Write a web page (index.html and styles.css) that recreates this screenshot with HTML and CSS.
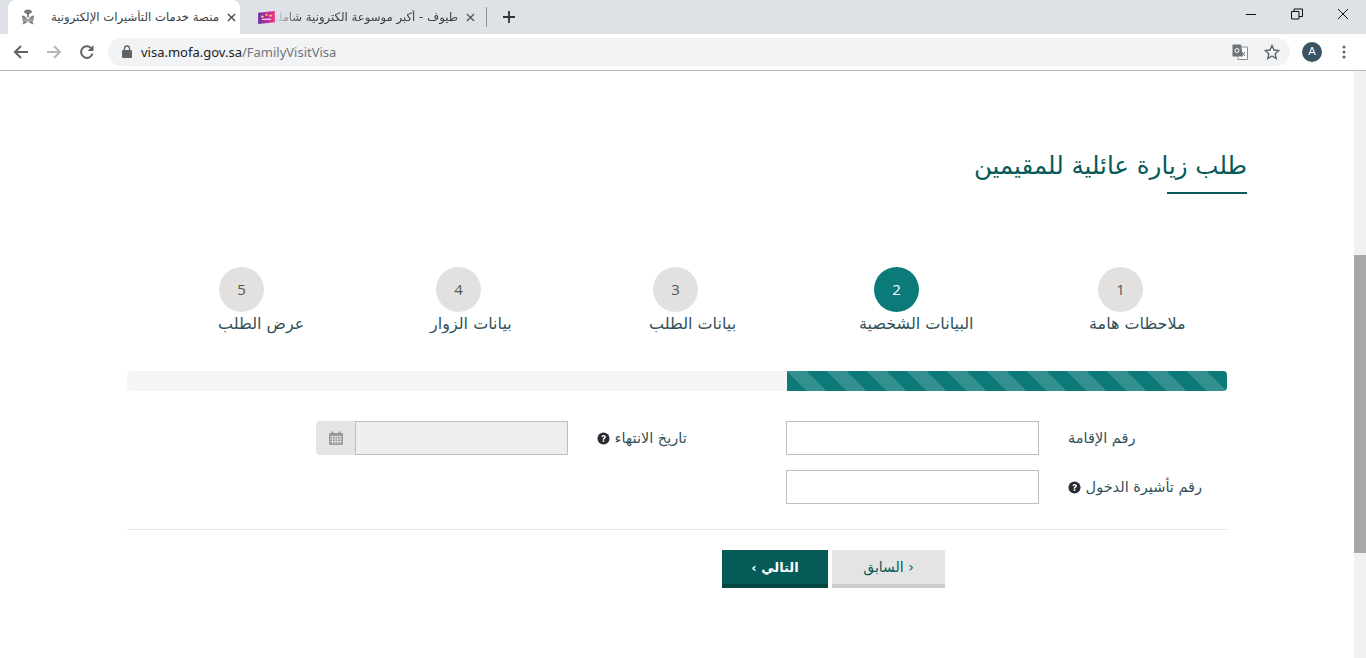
FILE: index.html
```html
<!DOCTYPE html>
<html lang="ar">
<head>
  <meta charset="UTF-8" />
  <title>منصة خدمات التأشيرات الإلكترونية</title>
  <link rel="stylesheet" href="styles.css">
</head>
<body>
  <!-- browser chrome -->
  <div class="tabstrip">
    <div class="tab tab-active">
      <svg class="favicon" viewBox="0 0 16 16"><path d="M8 .5c2.500 0 4 1.300 4 3L8 5.500 4 3.500C4 1.800 5.500 .5 8 .5z" fill="#777b77"/><path d="M7.300 4h1.400v4H7.300z" fill="#55594f"/><path d="M2 6.500c2.500 0 5 1.500 5 3.500v3.500L4 15C2.500 13 2 10 2 6.500zM14 6.500c-2.500 0-5 1.500-5 3.500v3.500l3 1.500c1.500-2 2-5 2-8.500z" fill="#9b9f9b"/><path d="M2.500 15L13.500 7.500M13.500 15L2.500 7.500" stroke="#5d615d" stroke-width="1"/><path d="M5 9h6M5 11h6M5.500 13h5" stroke="#c3c6c3" stroke-width=".8"/></svg>
      <span class="tab-title">منصة خدمات التأشيرات الإلكترونية</span>
      <svg class="tab-close" viewBox="0 0 10 10"><path d="M1 1l8 8M9 1L1 9" stroke="#45484c" stroke-width="1.500"/></svg>
    </div>
    <div class="tab tab-other">
      <svg class="favicon favicon-wide" viewBox="0 0 18 14"><defs><linearGradient id="tayf" x1="0" y1="0" x2="1" y2="0"><stop offset="0" stop-color="#6d2fa8"/><stop offset=".6" stop-color="#c42a9a"/><stop offset="1" stop-color="#f5377f"/></linearGradient></defs><path d="M0 2l18-2v12L0 14z" fill="url(#tayf)"/><path d="M3 6h3M8 4h2M12 5h3" stroke="#f3d25a" stroke-width="2"/><path d="M4 9h10" stroke="#f7c7e4" stroke-width="1.500"/></svg>
      <span class="tab-title tab-fade">طيوف - أكبر موسوعة الكترونية شاملة</span>
      <svg class="tab-close" viewBox="0 0 10 10"><path d="M1 1l8 8M9 1L1 9" stroke="#55585c" stroke-width="1.500"/></svg>
    </div>
    <span class="tab-sep"></span>
    <svg class="new-tab" viewBox="0 0 12 12"><path d="M6 0v12M0 6h12" stroke="#303438" stroke-width="1.800"/></svg>
    <div class="win-controls">
      <svg viewBox="0 0 12 12"><path d="M1 6.500h10" stroke="#111" stroke-width="1"/></svg>
      <svg viewBox="0 0 12 12"><path d="M.5 3.500h7.500v7.500H.5zM3 3.500V1h8.500v7.500H8" fill="none" stroke="#111" stroke-width="1"/></svg>
      <svg viewBox="0 0 12 12"><path d="M1 1l10 10M11 1L1 11" stroke="#111" stroke-width="1"/></svg>
    </div>
  </div>

  <div class="toolbar">
    <svg class="nav-icon" viewBox="0 0 16 16"><path d="M15 8H2M8 2L2 8l6 6" fill="none" stroke="#5f6368" stroke-width="2"/></svg>
    <svg class="nav-icon" viewBox="0 0 16 16"><path d="M1 8h13M8 2l6 6-6 6" fill="none" stroke="#b4b7bb" stroke-width="2"/></svg>
    <svg class="nav-icon" viewBox="0 0 16 16"><path d="M13.500 9.500A5.800 5.800 0 1 1 12 4" fill="none" stroke="#5f6368" stroke-width="2"/><path d="M14.500 1v6h-6z" fill="#5f6368"/></svg>
    <div class="omnibox">
      <svg class="lock" viewBox="0 0 10 13"><path d="M2.500 5V3.500a2.500 2.500 0 0 1 5 0V5" fill="none" stroke="#5f6368" stroke-width="1.300"/><rect y="5" width="10" height="8" rx="1" fill="#5f6368"/></svg>
      <span class="url">visa.mofa.gov.sa<span class="url-path">/FamilyVisitVisa</span></span>
      <svg class="translate" viewBox="0 0 16 16"><path d="M6 3h9.500v12.500H6z" fill="#fff" stroke="#8a8d90"/><path d="M.5.500h8.500l2 12H.5z" fill="#6f7377"/><circle cx="5" cy="6.500" r="2" fill="none" stroke="#fff"/><path d="M10 8l3 4M13 8l-3 4" stroke="#6f7377"/></svg>
      <svg class="star" viewBox="0 0 16 16"><path d="M8 1.500l2 4.500 4.800.5-3.600 3.200 1 4.800L8 12l-4.200 2.500 1-4.800L1.200 6.500 6 6z" fill="none" stroke="#5f6368" stroke-width="1.400"/></svg>
    </div>
    <span class="avatar">A</span>
    <svg class="menu-dots" viewBox="0 0 4 14"><circle cx="2" cy="2" r="1.500"/><circle cx="2" cy="7" r="1.500"/><circle cx="2" cy="12" r="1.500"/></svg>
  </div>

  <!-- page -->
  <div class="viewport">
    <main class="page" dir="rtl">
      <h2 class="page-title">طلب زيارة عائلية للمقيمين</h2>

      <div class="steps">
        <div class="step"><span class="circle">1</span><span class="step-label">ملاحظات هامة</span></div>
        <div class="step step-current"><span class="circle">2</span><span class="step-label">البيانات الشخصية</span></div>
        <div class="step"><span class="circle">3</span><span class="step-label">بيانات الطلب</span></div>
        <div class="step"><span class="circle">4</span><span class="step-label">بيانات الزوار</span></div>
        <div class="step"><span class="circle">5</span><span class="step-label">عرض الطلب</span></div>
      </div>

      <div class="progress"><div class="progress-bar" style="width: 40%"></div></div>

      <form class="visa-form">
        <label class="field-label" for="iqama">رقم الإقامة</label>
        <input class="field" id="iqama" type="text">
        <label class="field-label" for="expiry">تاريخ الانتهاء
          <svg class="help" viewBox="0 0 14 14"><circle cx="7" cy="7" r="6.500" fill="#2b2b33"/><path d="M4.800 5.400C5 3.900 6 3.300 7.200 3.300c1.300 0 2.300.8 2.300 2 0 1.700-1.800 1.500-1.800 3H6.100c0-2.200 1.700-2 1.700-3 0-.5-.3-.8-.8-.8s-.8.300-1 1z" fill="#fff"/><rect x="6.100" y="9" width="1.700" height="1.700" fill="#fff"/></svg>
        </label>
        <div class="date-group">
          <input class="field field-disabled" id="expiry" type="text" disabled>
          <span class="date-addon">
            <svg viewBox="0 0 14 14"><path d="M0 3a1 1 0 0 1 1-1h12a1 1 0 0 1 1 1v10a1 1 0 0 1-1 1H1a1 1 0 0 1-1-1z" fill="#999"/><path d="M1 5.500h12M1 8h12M1 10.500h12M3.500 5v8M6 5v8M8.500 5v8M11 5v8" stroke="#e4e4e4" stroke-width=".8"/><path d="M3.500 .5v3M10.500 .5v3" stroke="#999" stroke-width="2"/></svg>
          </span>
        </div>
        <label class="field-label" for="entry">رقم تأشيرة الدخول
          <svg class="help" viewBox="0 0 14 14"><circle cx="7" cy="7" r="6.500" fill="#2b2b33"/><path d="M4.800 5.400C5 3.900 6 3.300 7.200 3.300c1.300 0 2.300.8 2.300 2 0 1.700-1.800 1.500-1.800 3H6.100c0-2.200 1.700-2 1.700-3 0-.5-.3-.8-.8-.8s-.8.300-1 1z" fill="#fff"/><rect x="6.100" y="9" width="1.700" height="1.700" fill="#fff"/></svg>
        </label>
        <input class="field" id="entry" type="text">
      </form>

      <hr class="divider">

      <div class="actions">
        <button class="btn btn-prev" type="button">&lsaquo; السابق</button>
        <button class="btn btn-next" type="button">التالي &rsaquo;</button>
      </div>
    </main>
    <div class="scrollbar"><span class="thumb"></span></div>
  </div>
</body>
</html>
```

FILE: styles.css
```css
:root {
  --teal: #0b7a78;
  --teal-dark: #065a58;
  --teal-darker: #044642;
  --text: #33505a;
  --arabic: "DejaVu Sans", sans-serif;
}

* {
  margin: 0;
  padding: 0;
  box-sizing: border-box;
}

html, body {
  height: 658px;
  overflow: hidden;
}

body {
  font-family: var(--arabic);
  background: #fff;
  color: var(--text);
  display: flex;
  flex-direction: column;
}

/* tab strip */
.tabstrip {
  height: 34px;
  flex: none;
  background: #dee1e6;
  display: flex;
  align-items: flex-end;
  padding-left: 8px;
}

.tab {
  display: flex;
  align-items: center;
  font-size: 11.7px;
  color: #3c4043;
}

.tab-active {
  width: 232px;
  height: 34px;
  padding: 0 4px 0 12px;
  background: #fff;
  border-radius: 8px 8px 0 0;
}

.tab-other {
  width: 246px;
  height: 34px;
  padding: 0 11px 0 18px;
}

.favicon {
  width: 16px;
  height: 16px;
  flex: none;
}

.favicon-wide {
  width: 17px;
  height: 13px;
}

.tab-title {
  flex: 1;
  min-width: 0;
  direction: rtl;
  white-space: nowrap;
  overflow: hidden;
  text-align: right;
  padding: 0 8px 0 0;
}

.tab-fade {
  -webkit-mask-image: linear-gradient(to right, transparent, #000 24px);
  mask-image: linear-gradient(to right, transparent, #000 24px);
}

.tab-close {
  width: 9px;
  height: 9px;
  flex: none;
}

.tab-sep {
  width: 1px;
  height: 20px;
  background: #8f9295;
  margin-bottom: 7px;
}

.new-tab {
  width: 12px;
  height: 12px;
  margin: 0 0 11px 16px;
}

.win-controls {
  margin-left: auto;
  align-self: flex-start;
  display: flex;
  padding-top: 8px;
  gap: 34px;
  padding-right: 17px;
}

.win-controls svg {
  width: 12px;
  height: 12px;
}

/* toolbar */
.toolbar {
  height: 37px;
  flex: none;
  background: #fff;
  border-bottom: 1px solid #b7b9bb;
  display: flex;
  align-items: center;
  padding: 0 0 1px 13px;
}

.nav-icon {
  width: 16px;
  height: 16px;
  margin-right: 17px;
  flex: none;
}

.omnibox {
  width: 1182px;
  height: 28px;
  margin-left: -4px;
  background: #f1f3f4;
  border-radius: 14px;
  display: flex;
  align-items: center;
  padding: 0 10px 0 14px;
  font-family: "Noto Sans", sans-serif;
  font-size: 13px;
  color: #202124;
}

.lock {
  width: 10px;
  height: 13px;
  margin-right: 9px;
}

.url-path {
  color: #70757a;
}

.translate {
  width: 16px;
  height: 16px;
  margin-left: auto;
  margin-right: 16px;
}

.star {
  width: 16px;
  height: 16px;
}

.avatar {
  width: 20px;
  height: 20px;
  margin-left: 12px;
  border-radius: 50%;
  background: #3b5463;
  color: #fff;
  font-size: 11px;
  text-align: center;
  line-height: 20px;
}

.menu-dots {
  width: 4px;
  height: 14px;
  margin-left: 20px;
  fill: #5f6368;
}

/* page */
.viewport {
  flex: 1;
  display: flex;
  min-height: 0;
}

.page {
  flex: 1;
  padding: 75px 127px 0;
  min-width: 0;
}

.page-title {
  font-size: 24.5px;
  font-weight: 400;
  line-height: 40px;
  color: var(--teal-dark);
  margin-right: -20px;
}

.page-title::after {
  content: "";
  display: block;
  width: 80px;
  height: 2px;
  margin-top: 6px;
  background: var(--teal-dark);
}

.steps {
  display: grid;
  grid-template-columns: 138px 230px 210px 219px 212px;
  margin-top: 73px;
}

.step {
  display: flex;
  flex-direction: column;
  align-items: flex-end;
}

.circle {
  width: 45px;
  height: 45px;
  border-radius: 50%;
  background: #e2e1df;
  color: #555;
  font-size: 15px;
  font-family: "Open Sans", sans-serif;
  line-height: 45px;
  text-align: center;
}

.step:nth-child(1) .circle { margin-left: 9px; }
.step:nth-child(2) .circle { margin-left: 15px; }
.step:nth-child(3) .circle { margin-left: 4px; }
.step:nth-child(4) .circle { margin-left: 6px; }
.step:nth-child(5) .circle { margin-left: 1px; }

.step-current .circle {
  background: var(--teal);
  color: #fff;
}

.step-label {
  font-size: 16px;
  line-height: 24px;
  white-space: nowrap;
}

.progress {
  height: 20px;
  margin-top: 35px;
  background: #f5f5f5;
  border-radius: 4px;
  overflow: hidden;
}

.progress-bar {
  height: 100%;
  background-color: var(--teal);
  background-image: linear-gradient(45deg,
    rgba(255, 255, 255, .17) 25%, transparent 25%,
    transparent 50%, rgba(255, 255, 255, .17) 50%,
    rgba(255, 255, 255, .17) 75%, transparent 75%, transparent);
  background-size: 40px 40px;
}

.visa-form {
  display: grid;
  grid-template-columns: 188px 253px 218px 252px;
  grid-auto-rows: 34px;
  row-gap: 15px;
  margin-top: 30px;
}

.field-label {
  font-size: 14.5px;
  line-height: 34px;
  text-align: left;
  padding-left: 29px;
  white-space: nowrap;
}

.help {
  width: 13px;
  height: 13px;
  vertical-align: -2px;
  margin-right: 0;
}

.field {
  width: 100%;
  height: 34px;
  border: 1px solid #bdbdbd;
  background: #fff;
  outline: none;
}

.field-disabled {
  background: #eee;
}

.date-group {
  display: flex;
}

.date-addon {
  width: 39px;
  flex: none;
  background: #e4e4e4;
  border-radius: 4px 0 0 4px;
  display: flex;
  align-items: center;
  justify-content: center;
}

.date-addon svg {
  width: 14px;
  height: 14px;
}

.divider {
  border: 0;
  border-top: 1px solid #e5e5e5;
  margin-top: 25px;
}

.actions {
  display: flex;
  gap: 4px;
  margin: 20px 282px 0 0;
}

.btn {
  height: 38px;
  border: 0;
  border-bottom: 4px solid;
  font-family: var(--arabic);
  font-size: 14px;
}

.btn-prev {
  width: 113px;
  background: #e4e4e4;
  border-color: #ccc;
  color: var(--teal-dark);
}

.btn-next {
  width: 106px;
  background: var(--teal-dark);
  border-color: var(--teal-darker);
  color: #fff;
  font-size: 13px;
  font-weight: 700;
}

/* scrollbar */
.scrollbar {
  width: 12px;
  flex: none;
  background: #f1f1f1;
  padding-top: 184px;
}

.thumb {
  display: block;
  height: 298px;
  background: #a8a8a8;
}
```
